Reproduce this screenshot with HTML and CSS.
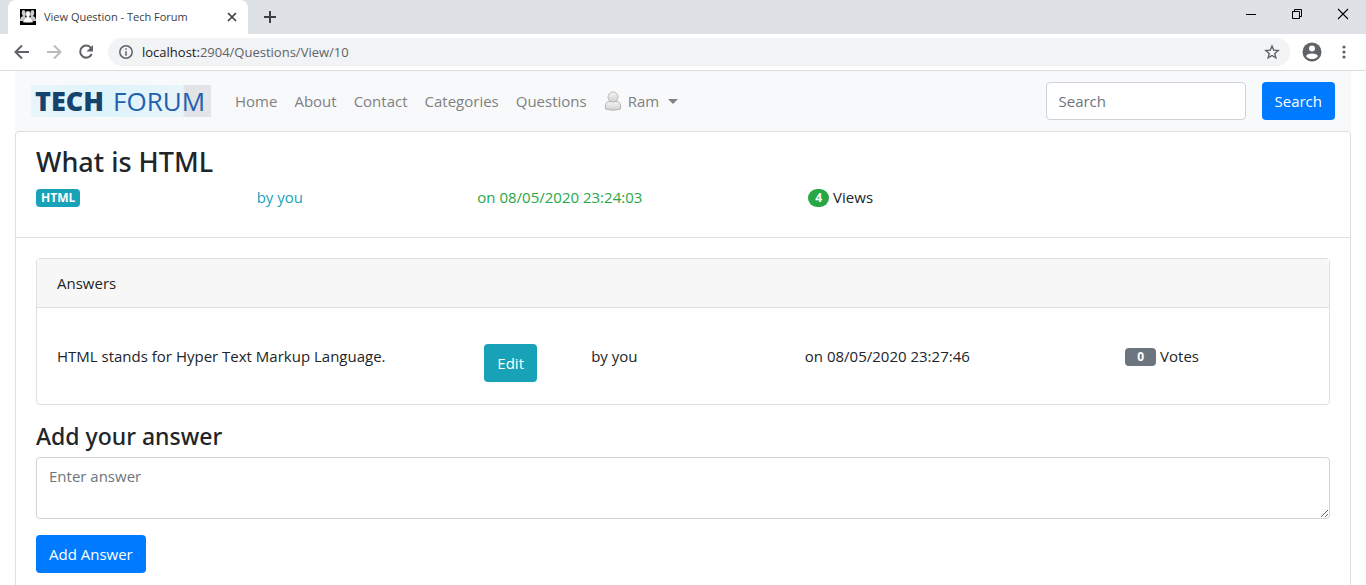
FILE: index.html
```html
<!DOCTYPE html>
<html lang="en">
<head>
<meta charset="utf-8">
<title>View Question - Tech Forum</title>
<link rel="stylesheet" href="styles.css">
</head>
<body>
<header class="browser">
  <div class="tabstrip">
    <div class="tab">
      <svg class="favicon" width="16" height="16" viewBox="0 0 16 16"><path d="M0 0h16v16H0z" fill="#000"/><path d="M0 12Q0 8 3 7Q1 5 2 2Q4 0 5 2L6 5L5 8Q8 8 5 12zM16 12Q16 8 13 7Q15 5 14 2Q12 0 11 2L10 5L11 8Q8 8 11 12z" fill="#ccc"/><path d="M3 13Q3 9 7 8Q5 6 6 3Q8 1 10 3Q11 6 9 8Q13 9 13 13Q8 14 3 13z" fill="#fff" stroke="#888" stroke-width=".6"/></svg>
      <span class="tab-title">View Question - Tech Forum</span>
      <button class="icon-btn" aria-label="Close tab"><svg width="10" height="10" viewBox="0 0 10 10"><path d="M1 1l8 8M9 1L1 9" stroke="#3c4043" stroke-width="1.7"/></svg></button>
    </div>
    <button class="icon-btn new-tab" aria-label="New tab"><svg width="12" height="12" viewBox="0 0 12 12"><path d="M6 0v12M0 6h12" stroke="#3c4043" stroke-width="2"/></svg></button>
    <div class="window-controls">
      <button class="icon-btn" aria-label="Minimize"><svg width="12" height="12" viewBox="0 0 12 12"><path d="M1 6.500h10" stroke="#000"/></svg></button>
      <button class="icon-btn" aria-label="Restore"><svg width="12" height="12" viewBox="0 0 12 12" fill="none" stroke="#000"><path d="M1.500 3.500h7v7h-7zM3.500 3.500v-2h7v7h-2"/></svg></button>
      <button class="icon-btn" aria-label="Close"><svg width="12" height="12" viewBox="0 0 12 12"><path d="M1 1l10 10M11 1L1 11" stroke="#000" stroke-width="1.100"/></svg></button>
    </div>
  </div>
  <div class="toolbar">
    <button class="icon-btn" aria-label="Back"><svg width="16" height="16" viewBox="0 0 16 16" fill="none" stroke="#5f6368" stroke-width="2"><path d="M15 8H2M8 1.500L1.500 8L8 14.500"/></svg></button>
    <button class="icon-btn" aria-label="Forward"><svg width="16" height="16" viewBox="0 0 16 16" fill="none" stroke="#babcbe" stroke-width="2"><path d="M1 8h13M8 1.500L14.500 8L8 14.500"/></svg></button>
    <button class="icon-btn" aria-label="Reload"><svg width="16" height="16" viewBox="0 0 16 16"><path d="M13 4A6 6 0 1 0 13.700 10" fill="none" stroke="#5f6368" stroke-width="2"/><path d="M15 1v6.500H8.500z" fill="#5f6368"/></svg></button>
    <div class="address">
      <svg width="14" height="14" viewBox="0 0 14 14" fill="none" stroke="#5f6368" stroke-width="1.500"><circle cx="7" cy="7" r="6.200"/><path d="M7 3.200v1.600M7 6.200v4.600"/></svg>
      <span class="url"><span class="host">localhost:</span>2904/Questions/View/10</span>
      <button class="icon-btn" aria-label="Bookmark"><svg width="16" height="16" viewBox="0 0 16 16"><path d="M8 2l1.700 4.100 4.500.4-3.400 2.900 1 4.400L8 11.500l-3.800 2.300 1-4.400-3.400-2.900 4.500-.4z" fill="none" stroke="#5f6368" stroke-width="1.400"/></svg></button>
    </div>
    <button class="icon-btn profile" aria-label="Profile"><svg width="20" height="20" viewBox="0 0 20 20"><circle cx="10" cy="10" r="9.500" fill="#5f6368"/><circle cx="10" cy="6.500" r="3" fill="#fff"/><path d="M4 14.200Q5 11.500 10 11.500T16 14.200Q14 17 10 17T4 14.200z" fill="#fff"/></svg></button>
    <button class="icon-btn" aria-label="Menu"><svg width="4" height="14" viewBox="0 0 4 14" fill="#5f6368"><circle cx="2" cy="2" r="1.600"/><circle cx="2" cy="7" r="1.600"/><circle cx="2" cy="12" r="1.600"/></svg></button>
  </div>
</header>
<div class="container">
  <nav class="navbar">
    <a class="logo" href="#"><b>TECH</b><span>FORUM</span></a>
    <a class="nav-link" href="#">Home</a>
    <a class="nav-link" href="#">About</a>
    <a class="nav-link" href="#">Contact</a>
    <a class="nav-link" href="#">Categories</a>
    <a class="nav-link" href="#">Questions</a>
    <a class="nav-link user" href="#">
      <svg width="18" height="20" viewBox="0 0 18 20"><defs><linearGradient id="person" x1="0" y1="0" x2="0" y2="1"><stop offset="0" stop-color="#f6f6f4"/><stop offset="1" stop-color="#d0d0ce"/></linearGradient></defs><path d="M1.500 18Q.8 11 5 10.500h8Q17.200 11 16.500 18Q9 20.500 1.500 18z" fill="url(#person)" stroke="#b4b4b2"/><circle cx="9" cy="6" r="5" fill="url(#person)" stroke="#bababa"/></svg>
      Ram <i class="caret"></i></a>
    <form class="search">
      <input class="control" type="search" placeholder="Search" aria-label="Search">
      <button class="btn primary" type="button">Search</button>
    </form>
  </nav>
  <main class="question">
    <section class="question-head">
      <h1>What is HTML</h1>
      <div class="row">
        <div class="span-2"><span class="badge info">HTML</span></div>
        <div class="span-2 text-info">by you</div>
        <div class="span-3 text-success">on 08/05/2020 23:24:03</div>
        <div class="span-3"><span class="badge pill">4</span> Views</div>
      </div>
    </section>
    <section class="question-body">
      <div class="card">
        <h2 class="card-title">Answers</h2>
        <div class="row answer">
          <div class="span-4">HTML stands for Hyper Text Markup Language.</div>
          <div class="span-1"><button class="btn teal" type="button">Edit</button></div>
          <div class="span-2">by you</div>
          <div class="span-3">on 08/05/2020 23:27:46</div>
          <div class="span-2"><span class="badge votes">0</span> Votes</div>
        </div>
      </div>
      <form>
        <label class="form-title" for="answer">Add your answer</label>
        <textarea class="control" id="answer" placeholder="Enter answer"></textarea>
        <button class="btn primary" type="button">Add Answer</button>
      </form>
    </section>
  </main>
</div>
</body>
</html>
```
FILE: styles.css
```css
* { box-sizing: border-box; }
body {
  margin: 0;
  min-height: 100vh;
  display: flex;
  flex-direction: column;
  font: 15px/24px "Open Sans", "Noto Sans", sans-serif;
  color: #212529;
  background: #fff;
}
svg { display: block; flex: none; }
button, input, textarea { font: inherit; }
a { text-decoration: none; }

.icon-btn { display: flex; padding: 0; border: 0; background: none; }
.tabstrip { display: flex; align-items: center; height: 34px; background: #dee1e6; }
.tab {
  align-self: stretch;
  display: flex;
  align-items: center;
  width: 240px;
  margin-left: 8px;
  padding: 0 11px 0 12px;
  background: #fff;
  border-radius: 8px 8px 0 0;
}
.tab-title { flex: 1; padding-left: 8px; font-size: 11px; color: #3c4043; }
.new-tab { margin-left: 16px; }
.window-controls { display: flex; gap: 34px; margin: 0 17px 6px auto; }
.toolbar {
  display: flex;
  align-items: center;
  gap: 16px;
  height: 37px;
  padding: 0 20px 0 14px;
  border-bottom: 1px solid #dadce0;
}
.address {
  flex: 1;
  display: flex;
  align-items: center;
  gap: 9px;
  height: 28px;
  margin-left: -2px;
  padding: 0 10px 0 11px;
  border-radius: 14px;
  background: #f1f3f4;
}
.url { flex: 1; font-size: 13px; color: #5f6368; }
.host { color: #202124; }
.profile { margin: 0 4px 0 -4px; }

.container { flex: 1; display: flex; flex-direction: column; padding: 0 15px; }
.navbar {
  display: flex;
  align-items: center;
  gap: 17px;
  height: 60px;
  padding: 0 16px;
  background: #f8f9fa;
}
.logo {
  display: flex;
  gap: 9px;
  align-items: center;
  width: 180px;
  height: 32px;
  margin-right: 7px;
  padding-left: 4px;
  font-size: 26px;
  color: #2460ae;
  background: linear-gradient(90deg, #eaf5fb, #def3fb 40%, #e8f5fa 84%, #dfe2e6 86%, #e4e5e8);
}
.logo b { font-size: 27px; font-weight: 800; color: #15436b; }
.nav-link { color: #808182; }
.user { display: flex; align-items: center; gap: 6px; }
.caret { margin-left: 3px; border: 5px solid transparent; border-top-color: #808182; border-bottom: 0; }
.search { display: flex; gap: 16px; margin-left: auto; }
.control {
  display: block;
  width: 100%;
  padding: 6px 12px;
  border: 1px solid #ced4da;
  border-radius: 4px;
  color: #495057;
  background: #fff;
}
.control::placeholder { color: #6c757d; opacity: 1; }
.search .control { width: 200px; height: 38px; }
.btn {
  height: 38px;
  padding: 6px 12px;
  border: 1px solid transparent;
  border-radius: 4px;
  color: #fff;
}
.primary { background: #007bff; }
.teal { background: #17a2b8; }

.question { flex: 1; border: 1px solid #dfdfdf; border-bottom: 0; border-radius: 4px 4px 0 0; }
.question-head { padding: 13px 20px 28px; border-bottom: 1px solid #dfdfdf; }
h1 { margin: 0 0 6px; font-family: "Noto Sans", sans-serif; font-size: 27px; line-height: 34px; font-weight: 500; }
.row { display: grid; grid-template-columns: repeat(12, 1fr); margin-right: -30px; }
.span-1 { grid-column: span 1; }
.span-2 { grid-column: span 2; }
.span-3 { grid-column: span 3; }
.span-4 { grid-column: span 4; }
.text-info { color: #17a2b8; }
.text-success { color: #28a745; }
.badge {
  display: inline-block;
  padding: 3px 5px;
  border-radius: 4px;
  font-size: 12px;
  line-height: 12px;
  font-weight: 700;
  vertical-align: 1px;
  color: #fff;
}
.info { background: #17a2b8; }
.pill { padding: 3px 7px; border-radius: 9px; background: #28a745; }
.votes { padding: 3px 12px; background: #6c757d; }

.question-body { padding: 20px 20px 12px; }
.card { border: 1px solid #dfdfdf; border-radius: 4px; margin-bottom: 16px; }
.card-title {
  margin: 0;
  padding: 12px 20px;
  font-size: 15px;
  line-height: 24px;
  font-weight: 400;
  background: #f7f7f7;
  border-bottom: 1px solid #dfdfdf;
}
.answer { margin-right: -10px; padding: 36px 0 22px 20px; }
.form-title { display: block; padding-top: 1px; margin-bottom: 6px; font-family: "Noto Sans", sans-serif; font-size: 23px; line-height: 29px; font-weight: 500; }
textarea.control { height: 62px; margin-bottom: 16px; resize: vertical; }
```
